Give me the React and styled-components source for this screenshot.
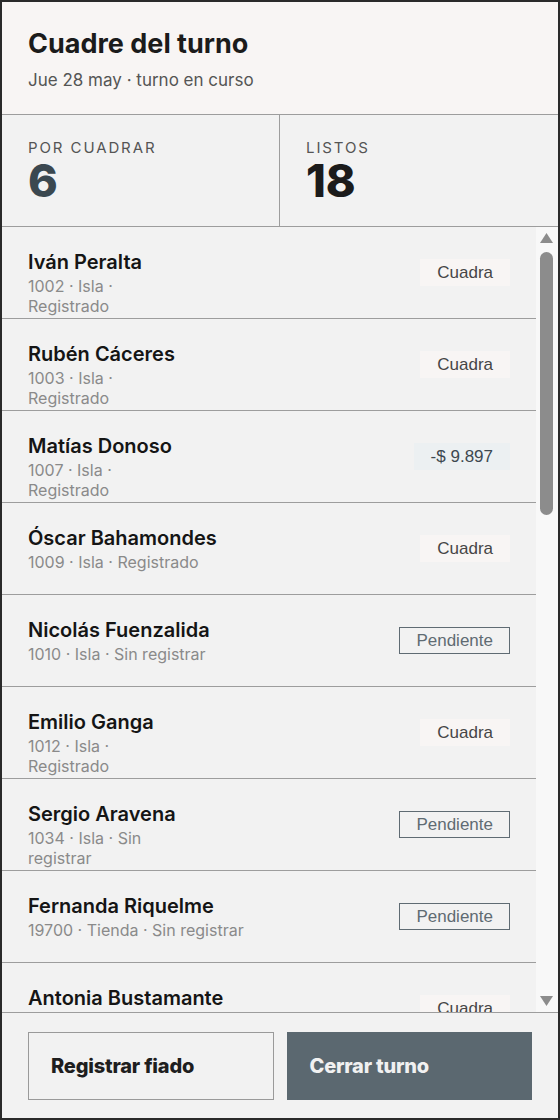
import React from 'react';
import styled, { createGlobalStyle } from 'styled-components';

const GlobalStyle = createGlobalStyle`
  html, body {
    margin: 0;
    padding: 0;
  }
  body {
    font-family: Inter, "Noto Sans", sans-serif;
    color: #1b1b1b;
  }
`;

const cajeros = [
  { name: 'Iván Peralta', meta: ['1002 · Isla ·', 'Registrado'], status: 'ok' },
  { name: 'Rubén Cáceres', meta: ['1003 · Isla ·', 'Registrado'], status: 'ok' },
  { name: 'Matías Donoso', meta: ['1007 · Isla ·', 'Registrado'], status: 'diff', amount: '-$ 9.897' },
  { name: 'Óscar Bahamondes', meta: ['1009 · Isla · Registrado'], status: 'ok' },
  { name: 'Nicolás Fuenzalida', meta: ['1010 · Isla · Sin registrar'], status: 'pending' },
  { name: 'Emilio Ganga', meta: ['1012 · Isla ·', 'Registrado'], status: 'ok' },
  { name: 'Sergio Aravena', meta: ['1034 · Isla · Sin', 'registrar'], status: 'pending' },
  { name: 'Fernanda Riquelme', meta: ['19700 · Tienda · Sin registrar'], status: 'pending' },
  { name: 'Antonia Bustamante', meta: ['19702 · Tienda · Registrado'], status: 'ok' },
  { name: 'Camila Rojas', meta: ['1041 · Isla ·', 'Registrado'], status: 'ok' },
  { name: 'Diego Muñoz', meta: ['1043 · Isla ·', 'Registrado'], status: 'ok' },
  { name: 'Valentina Soto', meta: ['1045 · Isla · Sin registrar'], status: 'pending' },
  { name: 'Javier Contreras', meta: ['1048 · Isla · Registrado'], status: 'ok' },
  { name: 'Paula Sepúlveda', meta: ['1050 · Isla · Registrado'], status: 'ok' },
  { name: 'Tomás Vergara', meta: ['1052 · Isla ·', 'Registrado'], status: 'diff', amount: '-$ 2.150' },
  { name: 'Francisca Pino', meta: ['1055 · Isla · Registrado'], status: 'ok' },
  { name: 'Cristián Tapia', meta: ['1058 · Isla · Registrado'], status: 'ok' },
  { name: 'Daniela Fuentes', meta: ['19705 · Tienda · Registrado'], status: 'ok' },
  { name: 'Felipe Navarro', meta: ['1060 · Isla · Registrado'], status: 'ok' },
  { name: 'Catalina Reyes', meta: ['1062 · Isla · Registrado'], status: 'ok' },
  { name: 'Andrés Espinoza', meta: ['1064 · Isla · Registrado'], status: 'ok' },
  { name: 'Constanza Lagos', meta: ['19708 · Tienda · Registrado'], status: 'ok' },
  { name: 'Ignacio Herrera', meta: ['1066 · Isla · Registrado'], status: 'ok' },
  { name: 'Josefa Morales', meta: ['1068 · Isla · Registrado'], status: 'ok' },
];

const Screen = styled.div`
  box-sizing: border-box;
  width: 560px;
  height: 1120px;
  border: 2px solid #2a2a2a;
  display: flex;
  flex-direction: column;
  background: #f2f2f2;
`;

const Header = styled.header`
  flex: 0 0 auto;
  height: 113px;
  box-sizing: border-box;
  padding: 26px 26px 0;
  background: #f8f5f4;
  border-bottom: 1px solid #9d9d9d;
`;

const Title = styled.h1`
  margin: 0;
  font-size: 27px;
  line-height: 32px;
  font-weight: 700;
  color: #1b1b1b;
`;

const Subtitle = styled.p`
  margin: 9px 0 0;
  font-size: 17px;
  line-height: 22px;
  color: #555;
`;

const Stats = styled.section`
  flex: 0 0 auto;
  height: 112px;
  box-sizing: border-box;
  display: grid;
  grid-template-columns: 277px 1fr;
  border-bottom: 1px solid #9d9d9d;
`;

const Stat = styled.div`
  padding: 24px 26px 0;
  & + & {
    border-left: 1px solid #9d9d9d;
  }
`;

const StatLabel = styled.div`
  font-size: 15px;
  line-height: 17px;
  letter-spacing: 1.9px;
  color: #555;
`;

const StatValue = styled.div`
  margin-top: 7px;
  font-size: 45px;
  line-height: 36px;
  font-weight: 800;
  color: ${(p) => (p.$accent ? '#3b4850' : '#1b1b1b')};
`;

const ListArea = styled.div`
  flex: 1 1 auto;
  min-height: 0;
  display: flex;
`;

const List = styled.div`
  flex: 1 1 auto;
  min-width: 0;
  overflow-y: auto;
  scrollbar-width: none;
  &::-webkit-scrollbar {
    display: none;
  }
`;

const Rail = styled.div`
  flex: 0 0 22px;
  display: flex;
  flex-direction: column;
  align-items: flex-start;
  padding: 6px 0 6px 4px;
  box-sizing: border-box;
  background: #f8f8f8;
`;

const Arrow = styled.svg`
  display: block;
  flex: 0 0 auto;
  fill: #8c8c8c;
`;

const Track = styled.div`
  flex: 1 1 auto;
  padding: 9px 0;
`;

const Thumb = styled.div`
  width: 13px;
  height: 263px;
  border-radius: 7px;
  background: #8c8c8c;
`;

const Row = styled.div`
  height: 92px;
  box-sizing: border-box;
  padding: 0 26px;
  display: flex;
  align-items: center;
  justify-content: space-between;
  border-bottom: 1px solid #9d9d9d;
`;

const Info = styled.div`
  align-self: flex-start;
  padding-top: 22px;
`;

const Name = styled.div`
  font-size: 20px;
  line-height: 27px;
  font-weight: 600;
  color: #151515;
`;

const Meta = styled.div`
  font-size: 16px;
  line-height: 20px;
  color: #8a8a8a;
`;

const Badge = styled.span`
  flex: 0 0 auto;
  box-sizing: border-box;
  height: 27px;
  line-height: 25px;
  padding: 0 16px;
  font-family: "Liberation Sans", Arial, sans-serif;
  font-size: 17px;
  border: 1px solid transparent;
  ${(p) =>
    p.$kind === 'ok' &&
    `
    background: #f8f5f4;
    color: #464646;
  `}
  ${(p) =>
    p.$kind === 'diff' &&
    `
    background: #ecf0f2;
    color: #3d4850;
  `}
  ${(p) =>
    p.$kind === 'pending' &&
    `
    border-color: #5f6b73;
    color: #5f6b73;
  `}
`;

const Footer = styled.footer`
  flex: 0 0 auto;
  box-sizing: border-box;
  height: 106px;
  padding: 19px 26px;
  display: grid;
  grid-template-columns: 1fr 1fr;
  gap: 13px;
  border-top: 1px solid #9d9d9d;
`;

const Action = styled.button`
  box-sizing: border-box;
  height: 68px;
  padding: 0 22px;
  text-align: left;
  font-family: Inter, "Noto Sans", sans-serif;
  font-size: 20px;
  font-weight: 800;
  letter-spacing: -0.2px;
  cursor: pointer;
  border: 1px solid ${(p) => (p.$primary ? '#5b6870' : '#9a9a9a')};
  background: ${(p) => (p.$primary ? '#5b6870' : '#f2f2f2')};
  color: ${(p) => (p.$primary ? '#f1f1f1' : '#1e1e1e')};
`;

function StatusBadge({ status, amount }) {
  if (status === 'diff') return <Badge $kind="diff">{amount}</Badge>;
  if (status === 'pending') return <Badge $kind="pending">Pendiente</Badge>;
  return <Badge $kind="ok">Cuadra</Badge>;
}

function ScrollRail() {
  return (
    <Rail aria-hidden="true">
      <Arrow width="13" height="10" viewBox="0 0 13 10">
        <polygon points="6.5,0 13,10 0,10" />
      </Arrow>
      <Track>
        <Thumb />
      </Track>
      <Arrow width="13" height="10" viewBox="0 0 13 10">
        <polygon points="0,0 13,0 6.5,10" />
      </Arrow>
    </Rail>
  );
}

export default function App() {
  return (
    <Screen>
      <GlobalStyle />
      <Header>
        <Title>Cuadre del turno</Title>
        <Subtitle>Jue 28 may · turno en curso</Subtitle>
      </Header>
      <Stats>
        <Stat>
          <StatLabel>POR CUADRAR</StatLabel>
          <StatValue $accent>6</StatValue>
        </Stat>
        <Stat>
          <StatLabel>LISTOS</StatLabel>
          <StatValue>18</StatValue>
        </Stat>
      </Stats>
      <ListArea>
        <List>
          {cajeros.map((c) => (
            <Row key={c.name}>
              <Info>
                <Name>{c.name}</Name>
                {c.meta.map((line) => (
                  <Meta key={line}>{line}</Meta>
                ))}
              </Info>
              <StatusBadge status={c.status} amount={c.amount} />
            </Row>
          ))}
        </List>
        <ScrollRail />
      </ListArea>
      <Footer>
        <Action>Registrar fiado</Action>
        <Action $primary>Cerrar turno</Action>
      </Footer>
    </Screen>
  );
}
